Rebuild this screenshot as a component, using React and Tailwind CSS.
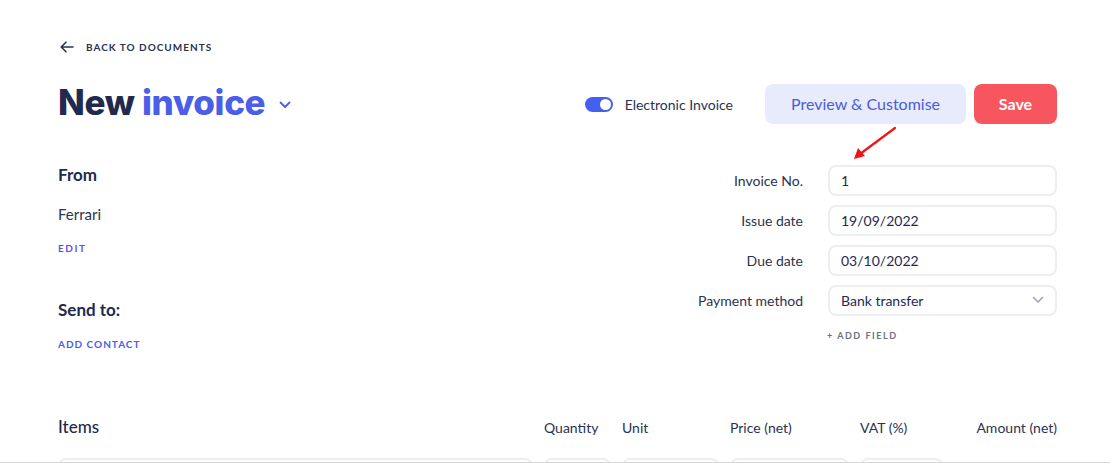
import React from 'react'

const fields = [
  { label: 'Invoice No.', value: '1' },
  { label: 'Issue date', value: '19/09/2022' },
  { label: 'Due date', value: '03/10/2022' },
]

function Field({ label, children }) {
  return (
    <div className="flex items-center">
      <div className="w-[150px] pr-[25px] text-right text-[14px] text-[#2a3350]">{label}</div>
      <div className="w-[229px] h-[31px] rounded-[8px] border-2 border-[#eceef2] flex items-center px-[11px] pb-px text-[14px] text-[#1f2a4e]">
        {children}
      </div>
    </div>
  )
}

function App() {
  return (
    <div className="relative h-[463px] w-[1110px] flex flex-col bg-white font-['Lato','Liberation_Sans',sans-serif] text-[#1f2a4e]">
      <div className="flex-1 overflow-hidden pl-[58px] pr-[53px]">
        {/* back link */}
        <div className="mt-[38px] h-[18px] flex items-center gap-[12px] pl-[2px]">
          <svg width="14" height="12" viewBox="0 0 14 12" fill="none" stroke="#2a3350" strokeWidth="1.6" strokeLinecap="round" strokeLinejoin="round">
            <path d="M13 6H1.5M6 1.2L1.2 6L6 10.8" />
          </svg>
          <span className="text-[10px] font-bold tracking-[0.1em] text-[#2a3350]">BACK TO DOCUMENTS</span>
        </div>

        {/* header */}
        <div className="mt-[28px] h-10 flex items-center">
          <div className="flex items-center -mt-[3px]">
            <h1 className="font-['Inter',sans-serif] font-extrabold text-[35px] tracking-[-0.01em] leading-none">
              <span className="text-[#1f2a4e]">New</span> <span className="text-[#4a5ee8]">invoice</span>
            </h1>
            <svg className="ml-[14px] mt-[5px]" width="12" height="8" viewBox="0 0 12 8" fill="none" stroke="#4a5ee8" strokeWidth="1.8" strokeLinecap="round" strokeLinejoin="round">
              <path d="M1.5 1.5L6 6L10.5 1.5" />
            </svg>
          </div>
          <div className="ml-auto flex items-center">
            <div className="w-[28px] h-[15px] rounded-full bg-[#4361ee] flex items-center justify-end pr-[2px]">
              <div className="w-[11px] h-[11px] rounded-full bg-white" />
            </div>
            <span className="ml-[12px] text-[14px] text-[#2a3350]">Electronic Invoice</span>
            <button className="ml-[32px] w-[201px] h-10 rounded-[8px] bg-[#e8ebfc] text-[16px] text-[#4a5bd6]">Preview &amp; Customise</button>
            <button className="ml-[8px] w-[83px] h-10 rounded-[8px] bg-[#f7565f] text-[16px] font-bold text-white">Save</button>
          </div>
        </div>

        {/* from / form */}
        <div className="mt-[41px] flex">
          <div className="flex-1 -mt-[1px]">
            <div className="h-[22px] leading-[22px] text-[17px] font-bold">From</div>
            <div className="mt-[18px] h-5 leading-5 text-[15px] text-[#2a3350]">Ferrari</div>
            <div className="mt-[17px] h-[14px] leading-[14px] text-[10px] font-bold tracking-[0.16em] text-[#5a55e0]">EDIT</div>
            <div className="mt-[44px] h-[22px] leading-[22px] text-[17px] font-bold">Send to:</div>
            <div className="mt-[16px] h-[14px] leading-[14px] text-[10px] font-bold tracking-[0.1em] text-[#4a5ee8]">ADD CONTACT</div>
          </div>
          <div className="flex flex-col gap-[9px]">
            {fields.map((f) => (
              <Field key={f.label} label={f.label}>{f.value}</Field>
            ))}
            <Field label="Payment method">
              <span className="flex-1">Bank transfer</span>
              <svg width="12" height="8" viewBox="0 0 12 8" fill="none" stroke="#9aa1b1" strokeWidth="1.5" strokeLinecap="round" strokeLinejoin="round">
                <path d="M1.5 1.5L6 6L10.5 1.5" />
              </svg>
            </Field>
            <div className="mt-[4px] pl-[149px] text-[9px] font-bold tracking-[0.17em] text-[#6b7280]">+ ADD FIELD</div>
          </div>
        </div>

        {/* items */}
        <div className="mt-[65px] flex items-center h-[22px] gap-[11px] text-[14px] text-[#2a3350]">
          <div className="flex-1 text-[17px] font-medium text-[#1f2a4e]">Items</div>
          <div className="w-[67px]">Quantity</div>
          <div className="w-[97px]">Unit</div>
          <div className="w-[119px]">Price (net)</div>
          <div className="w-[83px]">VAT (%)</div>
          <div className="w-[103px] text-right">Amount (net)</div>
        </div>
        <div className="mt-[20px] flex gap-[11px]">
          <div className="flex-1 h-[31px] rounded-[8px] border-2 border-[#eceef2]" />
          <div className="w-[67px] h-[31px] rounded-[8px] border-2 border-[#eceef2]" />
          <div className="w-[97px] h-[31px] rounded-[8px] border-2 border-[#eceef2]" />
          <div className="w-[119px] h-[31px] rounded-[8px] border-2 border-[#eceef2]" />
          <div className="w-[83px] h-[31px] rounded-[8px] border-2 border-[#eceef2]" />
          <div className="w-[103px]" />
        </div>
      </div>
      <div className="h-px bg-[#d6d6d6]" />

      {/* annotation arrow */}
      <svg className="absolute left-[850px] top-[124px]" width="50" height="40" viewBox="0 0 50 40" fill="none">
        <path d="M45 4L10 30" stroke="#f01414" strokeWidth="2.2" strokeLinecap="round" />
        <path d="M4 35L8 24L15 32Z" fill="#f01414" />
      </svg>
    </div>
  )
}

export default App
